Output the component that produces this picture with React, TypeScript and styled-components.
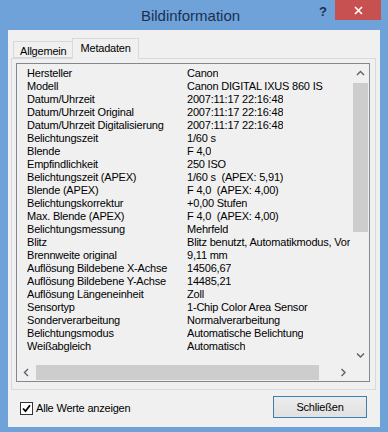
import React from "react";
import styled, { createGlobalStyle } from "styled-components";

const Global = createGlobalStyle`
  html, body { margin: 0; padding: 0; }
  body { width: 388px; height: 432px; overflow: hidden; background: #6ea2d8; }
  * { box-sizing: border-box; }
`;

const Frame = styled.div`
  width: 388px;
  height: 432px;
  background: #6ea2d8;
  display: flex;
  flex-direction: column;
  padding: 0 8px 5px 8px;
  font-family: "Liberation Sans", Arial, sans-serif;
`;

const TitleBar = styled.div`
  height: 30px;
  display: grid;
  grid-template-columns: 1fr auto 1fr;
  align-items: start;
  margin: 0 -1px 0 -8px;
`;

const Title = styled.div`
  grid-column: 2;
  font-size: 15px;
  color: #1b3050;
  padding-top: 7px;
  line-height: 17px;
`;

const Controls = styled.div`
  grid-column: 3;
  justify-self: end;
  display: flex;
  align-items: flex-start;
`;

const HelpButton = styled.div`
  width: 24px;
  height: 20px;
  display: flex;
  align-items: center;
  justify-content: center;
  font-size: 13px;
  font-weight: bold;
  color: #1b3050;
  padding-top: 2px;
`;

const CloseButton = styled.div`
  width: 46px;
  height: 20px;
  background: #c75050;
  display: flex;
  align-items: center;
  justify-content: center;
`;

const Client = styled.div`
  flex: 1;
  background: #f0f0f0;
  display: flex;
  flex-direction: column;
  padding: 8px 4px 0 3px;
`;

const TabStrip = styled.div`
  display: flex;
  align-items: flex-end;
  height: 20px;
  padding-left: 2px;
  position: relative;
  z-index: 1;
`;

const Tab = styled.div<{ $active?: boolean }>`
  height: ${(p) => (p.$active ? "21px" : "17px")};
  margin-bottom: ${(p) => (p.$active ? "-1px" : "0")};
  margin-left: ${(p) => (p.$active ? "-1px" : "0")};
  padding: ${(p) => (p.$active ? "3px 7px 0 8px" : "3px 5px 0 6px")};
  border: 1px solid #d9d9d9;
  border-bottom: ${(p) => (p.$active ? "none" : "1px solid #d9d9d9")};
  background: #f0f0f0;
  font-size: 11px;
  letter-spacing: -0.2px;
  line-height: 13px;
  color: #000;
`;

const Panel = styled.div`
  height: 332px;
  border: 1px solid #d9d9d9;
  padding: 4px 5px 7px 4px;
  display: flex;
`;

const ListBox = styled.div`
  flex: 1;
  border: 1px solid #828790;
  display: grid;
  grid-template-columns: 1fr 17px;
  grid-template-rows: 1fr 17px;
  background: #f0f0f0;
`;

const Content = styled.div`
  overflow: hidden;
  padding: 3px 0 0 10px;
`;

const Row = styled.div`
  display: grid;
  grid-template-columns: 160px max-content;
  height: 13px;
  line-height: 13px;
  font-size: 11px;
  letter-spacing: -0.2px;
  color: #000;
  white-space: pre;
`;

const Cell = styled.span`
  overflow: hidden;
`;

const VScroll = styled.div`
  display: grid;
  grid-template-rows: 19px 149px 1fr 17px;
  background: #f0f0f0;
`;

const HScroll = styled.div`
  display: grid;
  grid-template-columns: 19px 283px 1fr 17px;
  background: #f0f0f0;
`;

const Arrow = styled.div`
  display: flex;
  align-items: center;
  justify-content: center;
`;

const VThumb = styled.div`
  background: #cdcdcd;
  margin: 0 1px;
`;

const HThumb = styled.div`
  background: #cdcdcd;
  margin: 1px 0;
`;

const Corner = styled.div`
  background: #f0f0f0;
`;

const Footer = styled.div`
  display: flex;
  align-items: center;
  justify-content: space-between;
  padding: 6px 9px 0 9px;
`;

const CheckLabel = styled.label`
  display: flex;
  align-items: center;
  gap: 3px;
  font-size: 11px;
  letter-spacing: -0.2px;
  color: #000;
  margin-top: 2px;
`;

const CheckBox = styled.span`
  width: 13px;
  height: 13px;
  border: 1px solid #333;
  background: #fff;
  display: flex;
  align-items: center;
  justify-content: center;
`;

const Button = styled.div`
  width: 94px;
  height: 22px;
  border: 1px solid #3c7fb1;
  background: linear-gradient(#ececec, #e1e1e1);
  display: flex;
  align-items: center;
  justify-content: center;
  font-size: 11px;
  letter-spacing: -0.2px;
  color: #000;
`;

const rows: [string, string][] = [
  ["Hersteller", "Canon"],
  ["Modell", "Canon DIGITAL IXUS 860 IS"],
  ["Datum/Uhrzeit", "2007:11:17 22:16:48"],
  ["Datum/Uhrzeit Original", "2007:11:17 22:16:48"],
  ["Datum/Uhrzeit Digitalisierung", "2007:11:17 22:16:48"],
  ["Belichtungszeit", "1/60 s"],
  ["Blende", "F 4,0"],
  ["Empfindlichkeit", "250 ISO"],
  ["Belichtungszeit (APEX)", "1/60 s  (APEX: 5,91)"],
  ["Blende (APEX)", "F 4,0  (APEX: 4,00)"],
  ["Belichtungskorrektur", "+0,00 Stufen"],
  ["Max. Blende (APEX)", "F 4,0  (APEX: 4,00)"],
  ["Belichtungsmessung", "Mehrfeld"],
  ["Blitz", "Blitz benutzt, Automatikmodus, Vor"],
  ["Brennweite original", "9,11 mm"],
  ["Auflösung Bildebene X-Achse", "14506,67"],
  ["Auflösung Bildebene Y-Achse", "14485,21"],
  ["Auflösung Längeneinheit", "Zoll"],
  ["Sensortyp", "1-Chip Color Area Sensor"],
  ["Sonderverarbeitung", "Normalverarbeitung"],
  ["Belichtungsmodus", "Automatische Belichtung"],
  ["Weißabgleich", "Automatisch"],
];

const Chevron = ({ dir }: { dir: "up" | "down" | "left" | "right" }) => {
  const d = {
    up: "M1 5 L4.5 1.5 L8 5",
    down: "M1 1.5 L4.5 5 L8 1.5",
    left: "M5 1 L1.5 4.5 L5 8",
    right: "M1.5 1 L5 4.5 L1.5 8",
  }[dir];
  const horiz = dir === "left" || dir === "right";
  return (
    <svg width={horiz ? 7 : 9} height={horiz ? 9 : 7} viewBox={horiz ? "0 0 7 9" : "0 0 9 7"}>
      <path d={d} fill="none" stroke="#606060" strokeWidth="1.4" />
    </svg>
  );
};

export default function App() {
  return (
    <>
      <Global />
      <Frame>
        <TitleBar>
          <Title>Bildinformation</Title>
          <Controls>
            <HelpButton>?</HelpButton>
            <CloseButton>
              <svg width="9" height="9" viewBox="0 0 9 9">
                <path d="M1 1 L8 8 M8 1 L1 8" stroke="#fff" strokeWidth="1.6" />
              </svg>
            </CloseButton>
          </Controls>
        </TitleBar>
        <Client>
          <TabStrip>
            <Tab>Allgemein</Tab>
            <Tab $active>Metadaten</Tab>
          </TabStrip>
          <Panel>
            <ListBox>
              <Content>
                {rows.map(([k, v]) => (
                  <Row key={k}>
                    <Cell>{k}</Cell>
                    <Cell>{v}</Cell>
                  </Row>
                ))}
              </Content>
              <VScroll>
                <Arrow>
                  <Chevron dir="up" />
                </Arrow>
                <VThumb />
                <div />
                <Arrow>
                  <Chevron dir="down" />
                </Arrow>
              </VScroll>
              <HScroll>
                <Arrow>
                  <Chevron dir="left" />
                </Arrow>
                <HThumb />
                <div />
                <Arrow>
                  <Chevron dir="right" />
                </Arrow>
              </HScroll>
              <Corner />
            </ListBox>
          </Panel>
          <Footer>
            <CheckLabel>
              <CheckBox>
                <svg width="9" height="9" viewBox="0 0 9 9">
                  <path d="M1 4.5 L3.5 7.2 L8 1.2" fill="none" stroke="#000" strokeWidth="1.8" />
                </svg>
              </CheckBox>
              Alle Werte anzeigen
            </CheckLabel>
            <Button>Schließen</Button>
          </Footer>
        </Client>
      </Frame>
    </>
  );
}
